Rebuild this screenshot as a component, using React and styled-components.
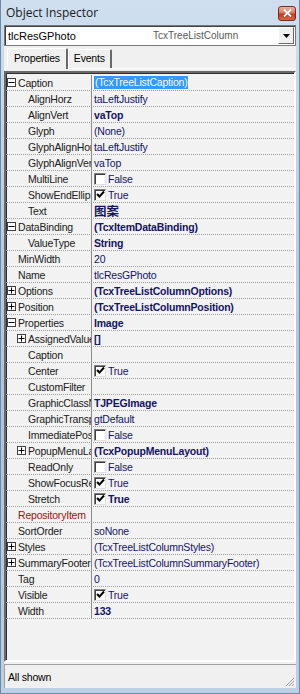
import React from "react";
import styled, { createGlobalStyle } from "styled-components";

const GlobalStyle = createGlobalStyle`
  html, body {
    margin: 0;
    padding: 0;
    background: #b9cde3;
  }
  * {
    box-sizing: border-box;
  }
`;

const rows = [
  { name: "Caption", level: 0, exp: "-", value: "(TcxTreeListCaption)", selected: true },
  { name: "AlignHorz", level: 1, value: "taLeftJustify" },
  { name: "AlignVert", level: 1, value: "vaTop", bold: true },
  { name: "Glyph", level: 1, value: "(None)" },
  { name: "GlyphAlignHorz", level: 1, value: "taLeftJustify" },
  { name: "GlyphAlignVert", level: 1, value: "vaTop" },
  { name: "MultiLine", level: 1, check: false },
  { name: "ShowEndEllipsis", level: 1, check: true },
  { name: "Text", level: 1, value: "图案", bold: true, cjk: true },
  { name: "DataBinding", level: 0, exp: "-", value: "(TcxItemDataBinding)", bold: true },
  { name: "ValueType", level: 1, value: "String", bold: true },
  { name: "MinWidth", level: 0, value: "20" },
  { name: "Name", level: 0, value: "tlcResGPhoto" },
  { name: "Options", level: 0, exp: "+", value: "(TcxTreeListColumnOptions)", bold: true },
  { name: "Position", level: 0, exp: "+", value: "(TcxTreeListColumnPosition)", bold: true },
  { name: "Properties", level: 0, exp: "-", value: "Image", bold: true },
  { name: "AssignedValues", level: 1, exp: "+", value: "[]", bold: true },
  { name: "Caption", level: 1, value: "" },
  { name: "Center", level: 1, check: true },
  { name: "CustomFilter", level: 1, value: "" },
  { name: "GraphicClassName", level: 1, value: "TJPEGImage", bold: true },
  { name: "GraphicTransparency", level: 1, value: "gtDefault" },
  { name: "ImmediatePost", level: 1, check: false },
  { name: "PopupMenuLayout", level: 1, exp: "+", value: "(TcxPopupMenuLayout)", bold: true },
  { name: "ReadOnly", level: 1, check: false },
  { name: "ShowFocusRect", level: 1, check: true },
  { name: "Stretch", level: 1, check: true, bold: true },
  { name: "RepositoryItem", level: 0, value: "", link: true },
  { name: "SortOrder", level: 0, value: "soNone" },
  { name: "Styles", level: 0, exp: "+", value: "(TcxTreeListColumnStyles)" },
  { name: "SummaryFooter", level: 0, exp: "+", value: "(TcxTreeListColumnSummaryFooter)" },
  { name: "Tag", level: 0, value: "0" },
  { name: "Visible", level: 0, check: true },
  { name: "Width", level: 0, value: "133", bold: true },
];

const Inspector = () => {
  return (
    <Window>
      <GlobalStyle />
      <TitleBar>
        <Title>Object Inspector</Title>
        <CloseButton>
          <svg width="9" height="8" viewBox="0 0 9 8">
            <path d="M1 0.5 L8 7.5 M8 0.5 L1 7.5" stroke="#fff" strokeWidth="1.8" />
          </svg>
        </CloseButton>
      </TitleBar>

      <Client>
        <Combo>
          <ComboName>tlcResGPhoto</ComboName>
          <ComboType>TcxTreeListColumn</ComboType>
          <ComboButton>
            <svg width="7" height="4" viewBox="0 0 7 4">
              <path d="M0 0 H7 L3.5 4 Z" fill="#000" />
            </svg>
          </ComboButton>
        </Combo>

        <TabStrip>
          <Tab active>Properties</Tab>
          <Tab>Events</Tab>
        </TabStrip>

        <Grid>
          {rows.map((r, i) => (
            <Row key={i}>
              <NameCell level={r.level} link={r.link}>
                {r.exp ? <Expander>{r.exp === "+" ? <PlusMark /> : <MinusMark />}</Expander> : <Spacer />}
                {r.name}
              </NameCell>
              <ValueCell bold={r.bold} cjk={r.cjk}>
                {r.check !== undefined ? (
                  <>
                    <CheckBox>
                      {r.check && (
                        <svg width="9" height="9" viewBox="0 0 9 9">
                          <path d="M1 4 L3.5 6.5 L8 1.5" stroke="#000" strokeWidth="2" fill="none" />
                        </svg>
                      )}
                    </CheckBox>
                    {r.check ? "True" : "False"}
                  </>
                ) : r.selected ? (
                  <Selected>{r.value}</Selected>
                ) : (
                  r.value
                )}
              </ValueCell>
            </Row>
          ))}
          <Filler />
        </Grid>

        <StatusBar>
          All shown
          <Grip>
            <svg width="11" height="11" viewBox="0 0 11 11">
              <path d="M10 2 L2 10 M10 5 L5 10 M10 8 L8 10" stroke="#a0a0a0" strokeWidth="1" />
            </svg>
          </Grip>
        </StatusBar>
      </Client>
    </Window>
  );
};

const PlusMark = () => (
  <svg width="7" height="7" viewBox="0 0 7 7">
    <path d="M0.5 3.5 H6.5 M3.5 0.5 V6.5" stroke="#000" strokeWidth="1" />
  </svg>
);

const MinusMark = () => (
  <svg width="7" height="7" viewBox="0 0 7 7">
    <path d="M0.5 3.5 H6.5" stroke="#000" strokeWidth="1" />
  </svg>
);

export default function App() {
  return <Inspector />;
}

const Window = styled.div`
  width: 300px;
  height: 694px;
  display: flex;
  flex-direction: column;
  padding: 0 3px 5px 3px;
  background: linear-gradient(180deg, #cfdff0 0%, #bacee4 30%, #aec4dc 60%, #bccfe4 100%);
  border-left: 1px solid #6e8aa8;
  border-right: 1px solid #6e8aa8;
  border-bottom: 1px solid #6e8aa8;
`;

const TitleBar = styled.div`
  height: 25px;
  display: flex;
  align-items: center;
  justify-content: space-between;
  padding: 0 0 0 2px;
`;

const Title = styled.div`
  font-family: "Open Sans", "Noto Sans", sans-serif;
  font-size: 12px;
  color: #1a1a1a;
`;

const CloseButton = styled.div`
  width: 18px;
  height: 15px;
  margin-top: 1px;
  display: flex;
  align-items: center;
  justify-content: center;
  border: 1px solid #7a2a20;
  border-radius: 3px;
  background: linear-gradient(180deg, #eab3a4 0%, #d9775f 45%, #c0391c 55%, #d76a44 100%);
`;

const Client = styled.div`
  flex: 1;
  display: flex;
  flex-direction: column;
  background: #f0f0f0;
  font-family: "Liberation Sans", Arial, sans-serif;
  font-size: 10.5px;
  letter-spacing: -0.2px;
`;

const Combo = styled.div`
  height: 21px;
  display: flex;
  align-items: center;
  background: #fff;
  border: 1px solid #7a7a7a;
  box-shadow: inset 1px 1px 0 #404040;
  padding-left: 3px;
`;

const ComboName = styled.span`
  width: 145px;
  color: #000;
  font-size: 11px;
  letter-spacing: 0;
`;

const ComboType = styled.span`
  flex: 1;
  color: #5a5a5a;
  font-size: 10px;
  letter-spacing: 0;
`;

const ComboButton = styled.div`
  width: 16px;
  height: 17px;
  margin-right: 1px;
  display: flex;
  align-items: center;
  justify-content: center;
  background: #f0f0f0;
  border-top: 1px solid #fff;
  border-left: 1px solid #fff;
  border-right: 1px solid #696969;
  border-bottom: 1px solid #696969;
`;

const TabStrip = styled.div`
  height: 23px;
  display: flex;
  align-items: flex-end;
  padding-left: 3px;
  border-bottom: 1px solid #fff;
`;

const Tab = styled.div`
  height: ${(p) => (p.active ? "21px" : "19px")};
  padding: ${(p) => (p.active ? "3px 6px 0 6px" : "2px 5px 0 5px")};
  margin-bottom: ${(p) => (p.active ? "-1px" : "0")};
  background: #f0f0f0;
  color: #000;
  border-top: 1px solid #fff;
  border-left: 1px solid #fff;
  border-right: 2px solid #696969;
  border-radius: 2px 2px 0 0;
  position: relative;
  z-index: ${(p) => (p.active ? 1 : 0)};
`;

const Grid = styled.div`
  flex: 1;
  display: flex;
  flex-direction: column;
  margin-top: 2px;
  background: #f2f2f2;
  border: 2px solid;
  border-color: #696969 #fff #fff #696969;
  box-shadow: inset 1px 1px 0 #303030;
  padding-top: 2px;
`;

const Row = styled.div`
  height: 16px;
  display: flex;
  border-bottom: 1px dotted #9c9c9c;
  flex-shrink: 0;
`;

const NameCell = styled.div`
  width: 86px;
  flex-shrink: 0;
  display: flex;
  align-items: center;
  padding-left: ${(p) => p.level * 10 + 1}px;
  white-space: nowrap;
  overflow: hidden;
  color: ${(p) => (p.link ? "#a01010" : "#202020")};
  border-right: 1px solid #8c8c8c;
`;

const Expander = styled.span`
  width: 9px;
  height: 9px;
  flex-shrink: 0;
  margin-right: 2px;
  border: 1px solid #404040;
  background: #fff;
  display: flex;
  align-items: center;
  justify-content: center;
`;

const Spacer = styled.span`
  width: 11px;
  flex-shrink: 0;
`;

const ValueCell = styled.div`
  flex: 1;
  display: flex;
  align-items: center;
  padding-left: 2px;
  white-space: nowrap;
  overflow: hidden;
  color: #141466;
  font-weight: ${(p) => (p.bold ? 700 : 400)};
  font-size: ${(p) => (p.cjk ? "12.5px" : "inherit")};
  letter-spacing: ${(p) => (p.cjk ? "0" : "inherit")};
  font-family: "Liberation Sans", "Noto Sans CJK SC", sans-serif;
`;

const Selected = styled.span`
  background: #3399ff;
  color: #f4f8ff;
  line-height: 13px;
  padding: 0 1px;
`;

const CheckBox = styled.span`
  width: 12px;
  height: 12px;
  margin-right: 2px;
  display: flex;
  align-items: center;
  justify-content: center;
  background: #fff;
  border: 1px solid;
  border-color: #808080 #e0e0e0 #e0e0e0 #808080;
  box-shadow: inset 1px 1px 0 #404040;
`;

const Filler = styled.div`
  flex: 1;
`;

const StatusBar = styled.div`
  height: 24px;
  margin-top: 2px;
  display: flex;
  align-items: center;
  justify-content: space-between;
  padding-left: 3px;
  color: #000;
  border-top: 1px solid #a0a0a0;
  border-left: 1px solid #a0a0a0;
`;

const Grip = styled.div`
  align-self: flex-end;
  width: 11px;
  height: 11px;
  margin: 0 1px 1px 0;
`;
